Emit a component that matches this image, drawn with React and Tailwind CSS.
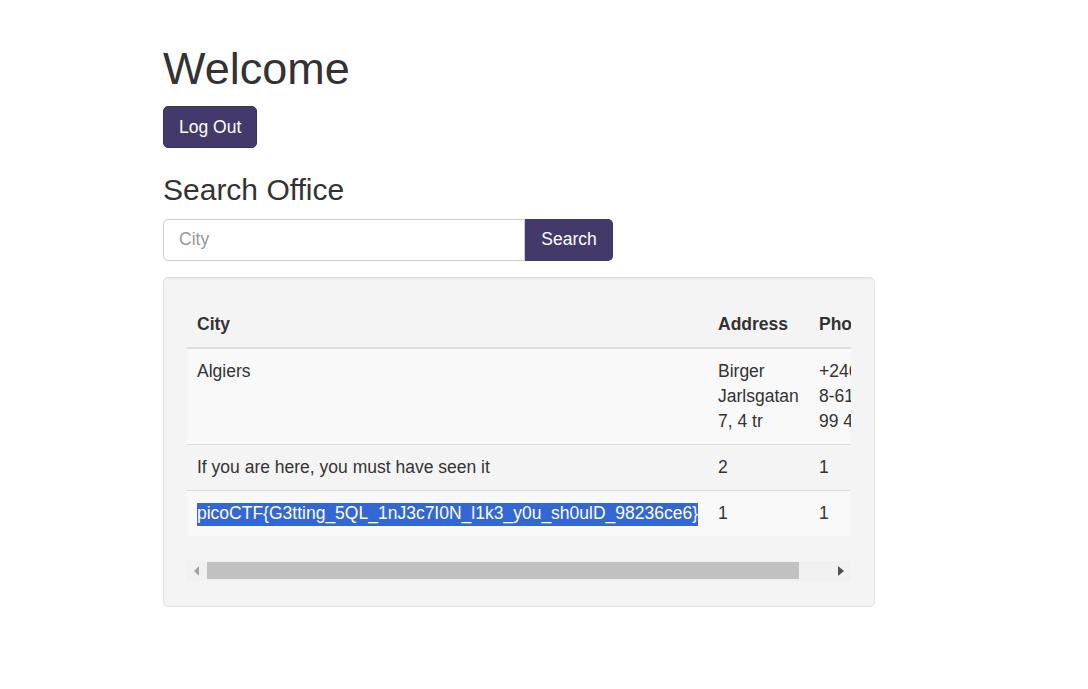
import React from 'react';

// --- Office rows shown in the result table ---
const offices = [
    { city: 'Algiers', address: 'Birger Jarlsgatan 7, 4 tr', phone: ['+246', '8-6100', '99 40'] },
    { city: 'If you are here, you must have seen it', address: '2', phone: ['1'] },
    { city: 'picoCTF{G3tting_5QL_1nJ3c7I0N_l1k3_y0u_sh0ulD_98236ce6}', address: '1', phone: ['1'], selected: true },
];

// --- Fake horizontal scrollbar of the table wrapper ---
const ScrollBar = () => (
    <div className="flex items-center h-[20px] bg-[#f1f1f1]">
        <div className="w-[20px] h-full flex items-center justify-center">
            <svg width="6" height="10" viewBox="0 0 6 10"><path d="M5 0 L0 5 L5 10 Z" fill="#a3a3a3" /></svg>
        </div>
        <div className="h-[17px] w-[592px] bg-[#c1c1c1]" />
        <div className="flex-1" />
        <div className="w-[20px] h-full flex items-center justify-center">
            <svg width="6" height="10" viewBox="0 0 6 10"><path d="M0 0 L6 5 L0 10 Z" fill="#505050" /></svg>
        </div>
    </div>
);

export default function App() {
    return (
        <div className="min-h-screen bg-white text-[#333] text-[17.5px] leading-[25px]" style={{ fontFamily: '"Liberation Sans", Arial, sans-serif' }}>
            <div className="pl-[163px] pt-[44px]">
                <div className="w-[712px]">
                    <h1 className="text-[45px] leading-[49.5px] font-normal mb-[12.5px]">Welcome</h1>
                    <button className="h-[42px] px-[15px] bg-[#433a6b] border border-[#3a325e] text-white rounded-[5px]">Log Out</button>

                    <h3 className="text-[30px] leading-[33px] font-normal mt-[25px] mb-[12.5px]">Search Office</h3>
                    <div className="flex w-[450px]">
                        <input
                            className="w-[362px] h-[42.5px] px-[15px] border border-[#ccc] rounded-l-[5px] outline-none placeholder:text-[#999] text-[#555]"
                            placeholder="City"
                        />
                        <button className="w-[88px] h-[42.5px] bg-[#433a6b] text-white rounded-r-[5px]">Search</button>
                    </div>

                    {/* --- Results well --- */}
                    <div className="mt-[15.5px] bg-[#f4f4f4] border border-[#e3e3e3] rounded-[5px] px-[23px] pt-[24px] pb-[25px] shadow-[inset_0_1px_1px_rgba(0,0,0,0.05)]">
                        <div className="overflow-hidden">
                            <table className="table-fixed border-collapse w-[718px] mb-[25px]">
                                <colgroup>
                                    <col className="w-[521px]" />
                                    <col className="w-[101px]" />
                                    <col className="w-[96px]" />
                                </colgroup>
                                <thead>
                                    <tr className="border-b-2 border-[#ddd]">
                                        <th className="text-left font-bold p-[10px] whitespace-nowrap">City</th>
                                        <th className="text-left font-bold p-[10px] whitespace-nowrap">Address</th>
                                        <th className="text-left font-bold p-[10px] whitespace-nowrap">Phone</th>
                                    </tr>
                                </thead>
                                <tbody>
                                    {offices.map((o, i) => (
                                        <tr key={i} className={`align-top ${i > 0 ? 'border-t border-[#ddd]' : ''} ${i % 2 === 0 ? 'bg-[#f9f9f9]' : ''}`}>
                                            <td className="p-[10px] whitespace-nowrap">
                                                {o.selected
                                                    ? <span className="inline-block bg-[#3367d6] text-white leading-[21px] h-[23px]">{o.city}</span>
                                                    : o.city}
                                            </td>
                                            <td className="p-[10px]">{o.address}</td>
                                            <td className="p-[10px]">
                                                {o.phone.map((line, j) => (
                                                    <div key={j} className="whitespace-nowrap">{line}</div>
                                                ))}
                                            </td>
                                        </tr>
                                    ))}
                                </tbody>
                            </table>
                        </div>
                        <ScrollBar />
                    </div>
                </div>
            </div>
        </div>
    );
}
